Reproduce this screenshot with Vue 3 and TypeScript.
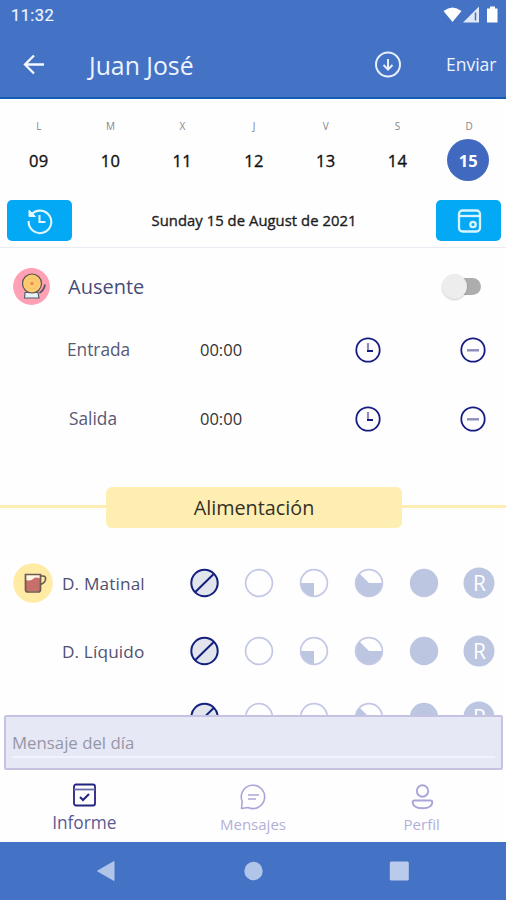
<script setup lang="ts">
type Level = 'none' | 'empty' | 'quarter' | 'most' | 'full' | 'repeat'

interface Day { letter: string; num: string; active?: boolean }
interface TimeEntry { label: string; value: string; cls: string }
interface Meal { label: string; mug?: boolean; levels: Level[] }

const days: Day[] = [
  { letter: 'L', num: '09' },
  { letter: 'M', num: '10' },
  { letter: 'X', num: '11' },
  { letter: 'J', num: '12' },
  { letter: 'V', num: '13' },
  { letter: 'S', num: '14' },
  { letter: 'D', num: '15', active: true },
]

const times: TimeEntry[] = [
  { label: 'Entrada', value: '00:00', cls: 'entry' },
  { label: 'Salida', value: '00:00', cls: 'exit' },
]

const levels: Level[] = ['none', 'empty', 'quarter', 'most', 'full', 'repeat']
const meals: Meal[] = [
  { label: 'D. Matinal', mug: true, levels },
  { label: 'D. Líquido', levels },
  { label: '', levels },
]
</script>

<template>
  <div class="screen">
    <header class="header">
      <div class="status">
        <span class="clock">11:32</span>
        <svg class="status-icons" width="58" height="20" viewBox="0 0 58 20">
          <path d="M0.5 6Q9.5-1 18.500 6L9.500 17Z" fill="#fff" />
          <path d="M20 17.500L36 1.500V17.500Z" fill="#dfe9fa" />
          <path d="M32.500 7.500V15.500" stroke="#4472c4" stroke-width="1.500" />
          <path d="M44 3.500h3V1.500h5v2h2.500v14H44Z" fill="#fff" />
        </svg>
      </div>
      <div class="appbar">
        <svg class="back" width="22" height="22" viewBox="0 0 22 22" fill="none" stroke="#f4f8ff" stroke-width="2.300">
          <path d="M21 10.500H2M11 1.500L2 10.500l9 9" />
        </svg>
        <h1 class="title">Juan José</h1>
        <svg class="download" width="28" height="28" viewBox="0 0 28 28" fill="none" stroke="#e8f0ff" stroke-width="2">
          <circle cx="14" cy="13.500" r="12" />
          <path d="M14 8V18.500M9.500 14L14 18.500l4.500-4.500" />
        </svg>
        <span class="send">Enviar</span>
      </div>
    </header>

    <section class="week">
      <div v-for="d in days" :key="d.num" class="day">
        <span class="letter">{{ d.letter }}</span>
        <span class="num" :class="{ active: d.active }">{{ d.num }}</span>
      </div>
    </section>

    <section class="date-row">
      <button class="blue-btn">
        <svg width="28" height="28" viewBox="0 0 28 28" fill="none" stroke="#e3f6ff" stroke-width="2.100">
          <path d="M5 8A11.300 11.300 0 1 1 2.700 14" />
          <path d="M3 3v6.500h6.500Z" fill="#e3f6ff" stroke-width="1" />
          <path d="M13.500 8v7h6" />
        </svg>
      </button>
      <span class="date">Sunday 15 de August de 2021</span>
      <button class="blue-btn">
        <svg width="26" height="26" viewBox="0 0 26 26" fill="none" stroke="#d9f3ff" stroke-width="2.300">
          <rect x="3" y="2.500" width="21" height="21" rx="3.500" />
          <path d="M3 8h21" />
          <circle cx="17" cy="16.500" r="2.700" />
        </svg>
      </button>
    </section>

    <main class="report">
      <div class="absent">
        <svg class="badge" width="38" height="38" viewBox="0 0 38 38">
          <circle cx="19.500" cy="18.500" r="18.400" fill="#ffa0b4" />
          <path d="M13 24.500h13l1 5.500H12.500Z" fill="#e6f3f7" stroke="#53616b" stroke-width="1.200" />
          <circle cx="20" cy="15.500" r="9.500" fill="#fdcb72" stroke="#5d5550" stroke-width="1.200" />
          <circle cx="20" cy="15.500" r="5.500" fill="none" stroke="#f8bd64" />
          <circle cx="20" cy="15.500" r="1.800" fill="#ef8c4c" />
          <path d="M27.500 25q4.500-2.500 5.500-8.500" fill="none" stroke="#56545e" stroke-width="1.700" />
        </svg>
        <span class="absent-label">Ausente</span>
        <span class="switch"><i class="knob"></i></span>
      </div>

      <div v-for="t in times" :key="t.label" class="time-row" :class="t.cls">
        <span class="time-label">{{ t.label }}</span>
        <span class="time-value">{{ t.value }}</span>
        <svg class="time-clock" width="26" height="26" viewBox="0 0 26 26" fill="none" stroke="#171c82">
          <circle cx="13" cy="13" r="11.700" stroke-width="1.800" />
          <path d="M13 6v7" stroke="#8d8dba" stroke-width="2.200" />
          <path d="M12 14H18" stroke-width="2" />
        </svg>
        <svg width="26" height="26" viewBox="0 0 26 26" fill="none" stroke="#171c82">
          <circle cx="13" cy="13" r="11.700" stroke-width="1.800" />
          <path d="M7 13.300h12" stroke="#8d8dba" stroke-width="2.400" />
        </svg>
      </div>

      <div class="divider"><h2 class="banner">Alimentación</h2></div>

      <div v-for="(m, i) in meals" :key="i" class="meal">
        <span class="meal-icon">
          <svg v-if="m.mug" width="40" height="40" viewBox="0 0 40 40">
            <circle cx="20" cy="20" r="19.800" fill="#ffeba4" />
            <path d="M12.500 11.500h15v15q0 2.500-2.500 2.500h-10q-2.500 0-2.500-2.500Z" fill="#fff6e5" />
            <path d="M13 17q4 1.500 7-1t7-.5V26.500q0 2-2 2h-10q-2 0-2-2Z" fill="#c76f6a" />
            <path d="M12.500 11.500h15v15q0 2.500-2.500 2.500h-10q-2.500 0-2.500-2.500ZM27.500 13h2.500q3 0 2.500 3.500t-5 5" fill="none" stroke="#6d5a51" stroke-width="1.700" />
          </svg>
        </span>
        <span class="meal-label">{{ m.label }}</span>
        <span v-for="l in m.levels" :key="l" class="level">
          <svg width="32" height="32" viewBox="0 0 32 32" fill="none">
            <template v-if="l === 'none'">
              <circle cx="16.500" cy="16" r="13.200" fill="#e3e5ec" stroke="#14207f" stroke-width="2" />
              <path d="M7.300 25L25.700 7" stroke="#14207f" stroke-width="2" />
            </template>
            <circle v-else-if="l === 'full'" cx="16" cy="16" r="14.200" fill="#bcc6e1" />
            <template v-else-if="l === 'repeat'">
              <circle cx="16" cy="16" r="15.500" fill="#bcc6e1" />
              <text class="r-mark" x="16.500" y="23.500" text-anchor="middle">R</text>
            </template>
            <template v-else>
              <path v-if="l === 'quarter'" d="M16 16V29.500A13.500 13.500 0 0 1 2.500 16Z" fill="#bcc6e1" />
              <path v-if="l === 'most'" d="M16 16H29.500A13.500 13.500 0 1 1 6.500 6.500Z" fill="#bcc6e1" />
              <circle cx="16" cy="16" r="13.400" stroke="#c3c8e6" stroke-width="1.700" />
            </template>
          </svg>
        </span>
      </div>
    </main>

    <div class="message"><span class="placeholder">Mensaje del día</span></div>

    <nav class="tabs">
      <div class="tab current">
        <svg width="26" height="26" viewBox="0 0 26 26" fill="none" stroke="#232480" stroke-width="1.800">
          <rect x="3" y="1.500" width="21" height="21" rx="2" />
          <path d="M3 6.500h21" stroke="#6c6ca8" />
          <path d="M9 14l3 3L18 11" stroke-width="2" />
        </svg>
        <span>Informe</span>
      </div>
      <div class="tab">
        <svg width="28" height="28" viewBox="0 0 28 28" fill="none" stroke="#aaa5d8" stroke-width="1.600">
          <path d="M2.500 25.500L3.200 18.500A11.700 11.700 0 1 1 9 24.500Z" stroke-linejoin="round" />
          <path d="M9 12h11M9 16h8" />
        </svg>
        <span>Mensajes</span>
      </div>
      <div class="tab">
        <svg width="28" height="28" viewBox="0 0 28 28" fill="none" stroke="#aaa5d8" stroke-width="1.900">
          <circle cx="14.500" cy="8" r="5.700" />
          <path d="M6.500 17.500H22.500q1.800 0 1.800 1.800 0 6-9.800 6t-9.800-6Q4.700 17.500 6.500 17.500Z" />
        </svg>
        <span>Perfil</span>
      </div>
    </nav>

    <footer class="navbar">
      <svg width="20" height="22" viewBox="0 0 20 22"><path d="M1.500 11L18 1.500v19Z" fill="#b1c5e9" stroke="#b1c5e9" stroke-linejoin="round" /></svg>
      <svg width="20" height="20" viewBox="0 0 20 20"><circle cx="10.500" cy="10" r="9.200" fill="#b1c5e9" /></svg>
      <svg width="20" height="20" viewBox="0 0 20 20"><rect x=".8" y=".5" width="19" height="19" rx="1.500" fill="#b9caec" /></svg>
    </footer>
  </div>
</template>

<style>
body { margin: 0; background: #fff; }
</style>

<style scoped>
.screen {
  width: 506px;
  height: 900px;
  display: flex;
  flex-direction: column;
  overflow: hidden;
  background: #fefeff;
  font-family: "Open Sans", "Noto Sans", sans-serif;
}
.screen * { box-sizing: border-box; }
.screen svg { display: block; flex: none; }
.header {
  height: 99px;
  flex: none;
  background: #4472c4;
  border-bottom: 2px solid #145bb8;
  color: #eef4ff;
}
.status {
  height: 32px;
  padding: 0 5px 0 11px;
  display: flex;
  align-items: center;
  justify-content: space-between;
}
.clock { font: 400 16.500px/32px Roboto, sans-serif; letter-spacing: .4px; -webkit-text-stroke: .2px; }
.status-icons { margin: 0 0 3px; }
.appbar { height: 65px; padding-left: 23px; display: flex; align-items: center; }
.title { width: 285px; margin: 0 0 0 44px; font-size: 24.800px; font-weight: 400; line-height: 32px; }
.send { margin-left: 44px; font-size: 17.500px; line-height: 24px; padding-bottom: 1px; }
.week {
  height: 101px;
  flex: none;
  padding: 18px 1px 0 3px;
  display: grid;
  grid-template-columns: repeat(7, 1fr);
}
.day { display: flex; flex-direction: column; align-items: center; }
.letter { height: 22px; font-size: 10px; line-height: 18px; color: #85858c; }
.num {
  width: 42px;
  height: 42px;
  border-radius: 50%;
  font-size: 16.500px;
  line-height: 43px;
  letter-spacing: .3px;
  text-align: center;
  color: #111;
  -webkit-text-stroke: .35px;
}
.num.active {
  margin-left: -2px;
  background: #4169bf;
  color: #fff;
  font-weight: 700;
  letter-spacing: 0;
  -webkit-text-stroke: 0;
}
.date-row {
  height: 48px;
  flex: none;
  padding: 0 5px 6px 7px;
  display: flex;
  align-items: center;
  justify-content: space-between;
  border-bottom: 1px solid #e8ecf2;
}
.blue-btn {
  width: 65px;
  height: 41px;
  padding: 0;
  border: 0;
  border-radius: 5px;
  display: grid;
  place-items: center;
  background: #03a9f4;
}
.date {
  padding-bottom: 1px;
  font-size: 14.800px;
  line-height: 20px;
  letter-spacing: .05px;
  color: #1c1c1c;
  -webkit-text-stroke: .35px;
}
.report { flex: 1; min-height: 0; overflow: hidden; }
.absent { height: 77px; padding: 0 25px 0 12px; display: flex; align-items: center; }
.absent-label { margin-left: 18px; flex: 1; font-size: 20px; color: #4a4d78; }
.switch { width: 32px; height: 17px; border-radius: 9px; background: #adadad; display: flex; align-items: center; }
.knob {
  width: 25px;
  height: 25px;
  flex: none;
  margin-left: -7px;
  border-radius: 50%;
  background: #ededed;
  box-shadow: 0 1px 2px #0003;
}
.time-row { padding-left: 67px; display: flex; align-items: center; }
.entry { height: 50px; }
.exit { height: 87px; }
.exit .time-label { padding-left: 2px; }
.time-label { width: 133px; font-size: 17.300px; line-height: 24px; color: #565875; }
.time-value { width: 155px; font-size: 16.500px; line-height: 24px; color: #333; }
.time-clock { margin-right: 79px; }
.divider {
  height: 41px;
  margin-top: 25px;
  display: flex;
  align-items: center;
  justify-content: center;
}
.divider::before, .divider::after { content: ""; height: 3px; margin-bottom: 3px; background: #ffeeb1; }
.divider::before { width: 106px; }
.divider::after { flex: 1; }
.banner {
  width: 296px;
  height: 41px;
  margin: 0;
  border-radius: 6px;
  background: #ffeeb1;
  font-size: 19.800px;
  font-weight: 400;
  line-height: 42px;
  text-align: center;
  color: #333128;
}
.meal { height: 68px; padding-left: 13px; display: flex; align-items: center; }
.divider + .meal { margin-top: 21px; }
.meal:last-child { height: 64px; }
.meal-icon { width: 40px; }
.meal-label { width: 124px; padding-left: 9px; font-size: 17.200px; letter-spacing: .15px; color: #505170; }
.level { width: 54.900px; display: grid; place-items: center; }
.r-mark { font-size: 21px; fill: #fff; }
.message {
  height: 55px;
  flex: none;
  margin: 0 3px 0 4px;
  padding: 0 6px;
  border: 2px solid #c5c2e2;
  border-radius: 2px;
  background: #e6e8f6;
}
.placeholder {
  height: 41px;
  display: block;
  border-bottom: 2px solid #f0f2fc;
  font-size: 16.800px;
  line-height: 51px;
  color: #9497a5;
}
.tabs { height: 72px; flex: none; display: grid; grid-template-columns: repeat(3, 1fr); }
.tab {
  padding-top: 13px;
  display: flex;
  flex-direction: column;
  align-items: center;
  font-size: 15px;
  line-height: 26px;
  color: #b3b0d6;
}
.tab svg { height: 28px; }
.tab.current { font-size: 17.300px; line-height: 24px; color: #5b5a92; }
.tab.current svg { height: 26px; margin-bottom: 2px; }
.navbar {
  height: 58px;
  flex: none;
  padding: 0 97px 0 96px;
  display: flex;
  align-items: center;
  justify-content: space-between;
  background: #4472c4;
}
</style>
